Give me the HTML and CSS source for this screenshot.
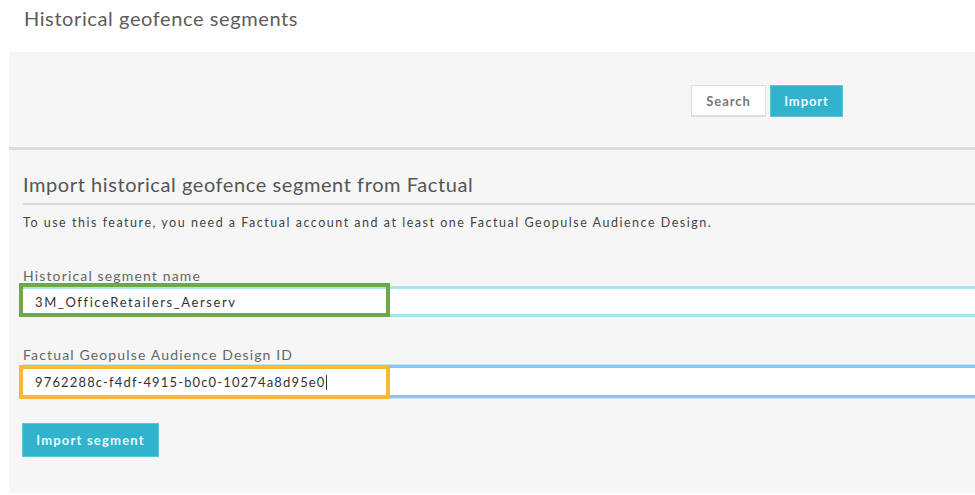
FILE: index.html
```html
<!DOCTYPE html>
<html>
<head>
<meta charset="utf-8">
<link rel="stylesheet" href="styles.css">
</head>
<body>
<div class="title">Historical geofence segments</div>
<div class="panel">
  <div class="toolbar">
    <button class="btn-search">Search</button>
    <button class="btn-import">Import</button>
  </div>
  <div class="section">
    <h2 class="heading">Import historical geofence segment from Factual</h2>
    <p class="desc">To use this feature, you need a Factual account and at least one Factual Geopulse Audience Design.</p>
    <div class="field">
      <div class="label">Historical segment name</div>
      <div class="input input-name"><span class="value">3M_OfficeRetailers_Aerserv</span><span class="mark mark-green"></span></div>
    </div>
    <div class="field field2">
      <div class="label">Factual Geopulse Audience Design ID</div>
      <div class="input input-id"><span class="value">9762288c-f4df-4915-b0c0-10274a8d95e0<span class="caret"></span></span><span class="mark mark-orange"></span></div>
    </div>
    <button class="btn-submit">Import segment</button>
  </div>
</div>
</body>
</html>
```
FILE: styles.css
```css
* { box-sizing: border-box; }
html, body { margin: 0; padding: 0; background: #fff; }
body { font-family: Lato, "Noto Sans", sans-serif; color: #555; width: 975px; height: 495px; overflow: hidden; }
.title { height: 52px; padding: 6px 0 0 24px; font-size: 20px; color: #5c5c5c; letter-spacing: 0.6px; }
.panel { margin-left: 9px; background: #f6f6f6; height: 441px; }
.toolbar { height: 98px; display: flex; justify-content: flex-end; align-items: flex-start; gap: 4px; padding: 33px 132px 0 0; border-bottom: 3px solid #dcdcdc; }
.toolbar button { height: 32px; font-family: inherit; font-size: 13px; font-weight: 700; border-radius: 0; cursor: pointer; letter-spacing: 0.9px; padding: 0; }
.btn-search { width: 75px; background: #fff; color: #777; border: 1px solid #ddd; border-bottom: 2px solid #ddd; }
.btn-import { width: 73px; background: #30b3cc; color: #eafaff; border: 1px solid #5cc6da; }
.section { padding: 22px 0 0 14px; }
.heading { margin: 0; font-size: 20px; font-weight: 400; color: #555; height: 33px; border-bottom: 2px solid #dcdcdc; letter-spacing: 0.58px; }
.desc { margin: 10px 0 0 0; font-size: 12.5px; color: #444; line-height: 16px; letter-spacing: 1.52px; }
.field { margin-top: 37px; }
.field2 { margin-top: 30px; }
.label { font-size: 14px; color: #666; line-height: 16px; letter-spacing: 1.15px; }
.input { position: relative; height: 31px; margin-top: 2px; background: #fff; border-top: 3px solid #a6e4ef; border-bottom: 3px solid #a6e4ef; display: flex; align-items: center; padding-left: 12px; font-size: 13px; color: #333; letter-spacing: 1.15px; }
.input-name .value { letter-spacing: 1.6px; }
.input-id { border-top-color: #86c8f4; border-bottom-color: #86c8f4; height: 33px; box-shadow: 0 -1px 0 #c9e4f7, 0 1px 0 #c9e4f7; }
.caret { display: inline-block; width: 1px; height: 15px; background: #333; vertical-align: -3px; margin-left: 0; }
.mark { position: absolute; left: -4px; width: 371px; border: 4px solid; pointer-events: none; }
.mark-green { top: -6px; height: 34px; border-color: #6fa84b; }
.mark-orange { top: -3px; height: 34px; border-color: #f8b935; }
.btn-submit { margin-top: 25px; width: 137px; height: 34px; padding: 0; background: #30b3cc; border: 1px solid #5cc6da; color: #eafaff; font-family: inherit; font-size: 13px; font-weight: 700; margin-left: -1px; letter-spacing: 1.2px; }
```
